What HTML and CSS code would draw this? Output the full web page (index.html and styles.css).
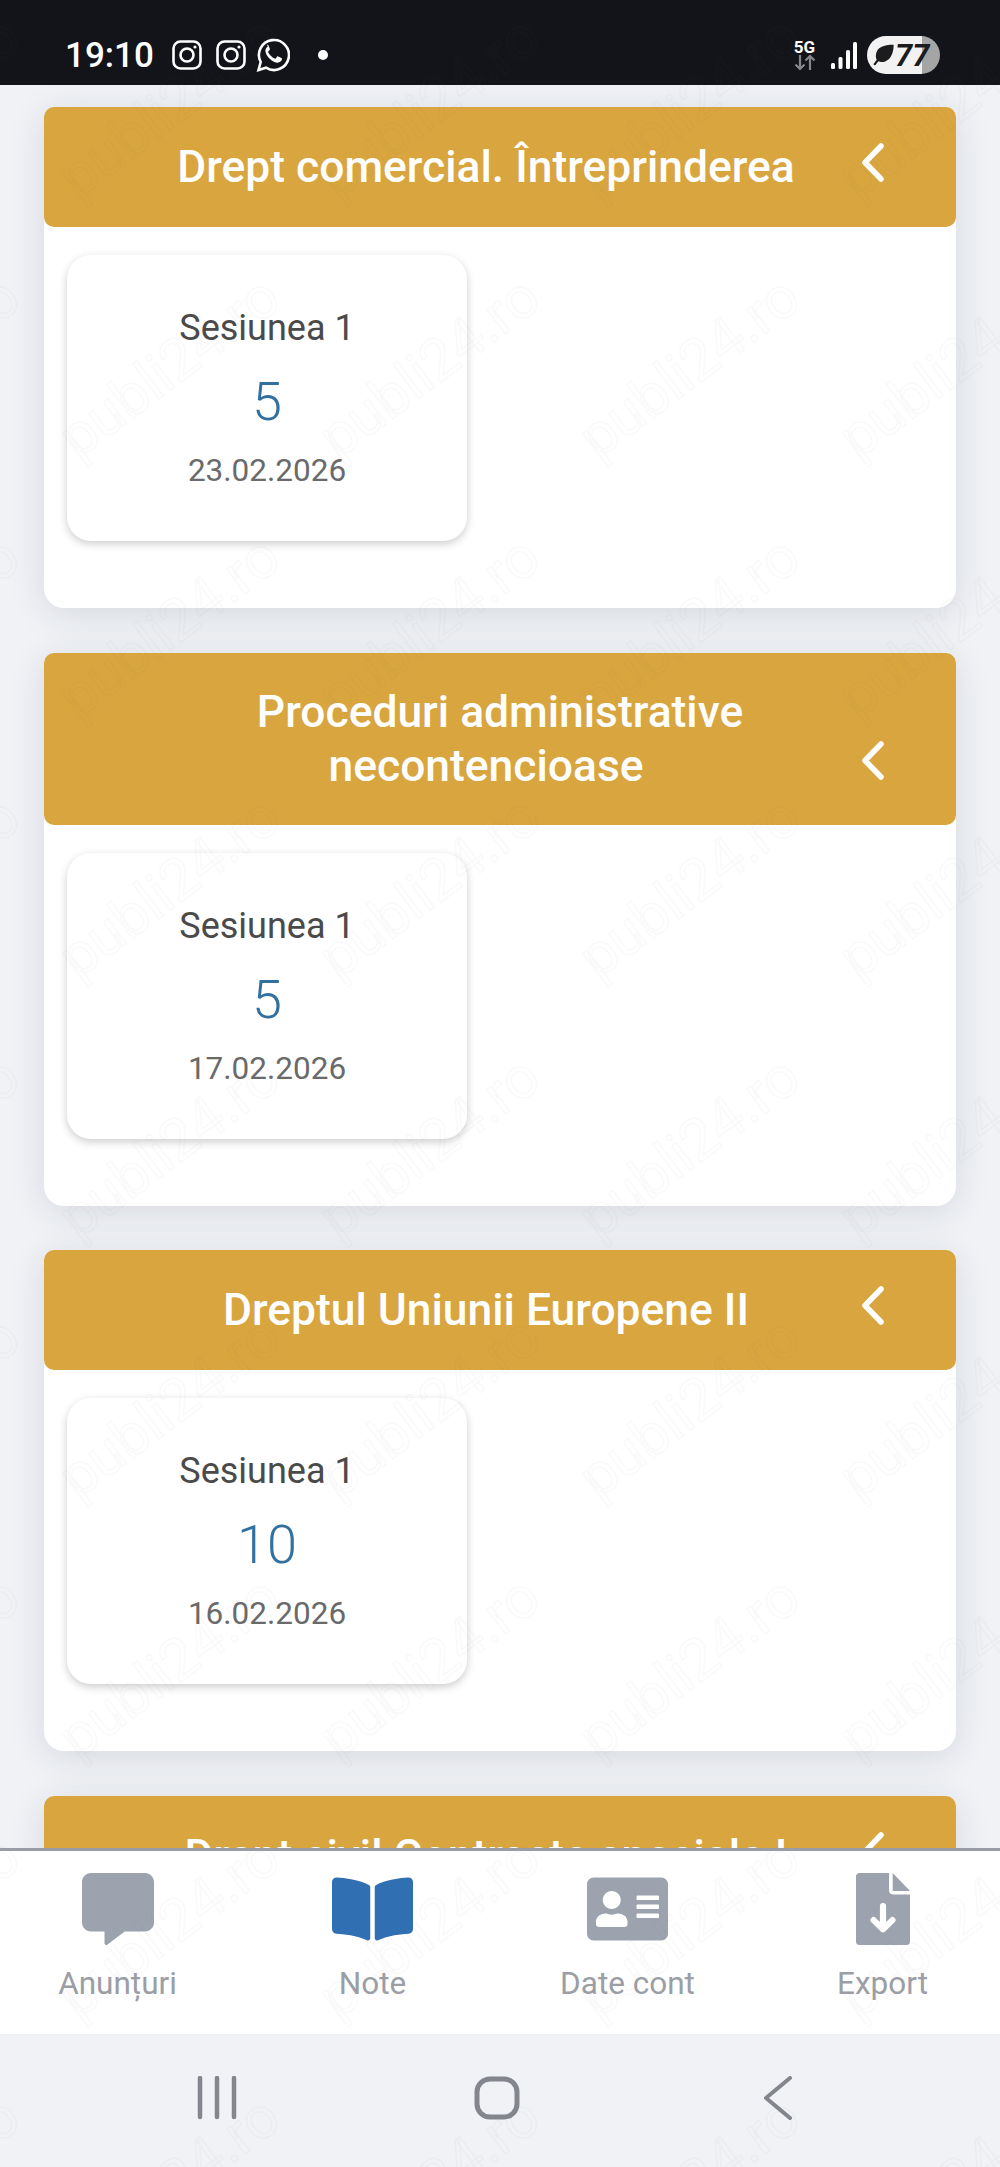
FILE: index.html
```html
<!doctype html>
<html lang="ro">
    <head>
        <meta charset="utf-8"/>
        <title>Note</title>
        <link rel="stylesheet" href="styles.css">
    </head>
    <body>
        <header class="status-bar">
            <div class="status-left">
                <span class="clock">19:10</span>
                <svg class="ig-icon" viewBox="0 0 30 30"><rect x="1.5" y="1.5" width="27" height="27" rx="7"/><circle cx="15" cy="15" r="6.5"/><circle class="dot" cx="23" cy="7" r="1.6"/></svg>
                <svg class="ig-icon" viewBox="0 0 30 30"><rect x="1.5" y="1.5" width="27" height="27" rx="7"/><circle cx="15" cy="15" r="6.5"/><circle class="dot" cx="23" cy="7" r="1.6"/></svg>
                <svg class="wa-icon" viewBox="0 0 34 34"><path class="wa-ring" d="M2.5 32l2.2-8A15 15 0 1 1 10 29.700z"/><path class="wa-phone" d="M11.800 8.800c-1.200.5-2.500 2-2.400 4.200.2 3 2.300 6 4.900 8.300 2.700 2.300 5.800 3.800 8.200 3.300 1.800-.4 3.300-1.800 3.500-3.300.1-.6-.1-.9-.6-1.200l-3.200-1.700c-.5-.2-.9-.1-1.200.3l-1.300 1.700c-.3.3-.6.4-1 .2-1.300-.6-2.800-1.700-4-2.900-1.100-1.100-2-2.400-2.500-3.500-.2-.4-.1-.7.200-1l1.200-1.300c.3-.4.4-.7.2-1.200l-1.400-3.400c-.2-.5-.7-.7-1.400-.5z"/></svg>
                <span class="status-dot"></span>
            </div>
            <div class="status-right">
                <div class="net">
                    <span class="net-label">5G</span>
                    <svg class="net-arrows" viewBox="0 0 22 17"><path d="M6 1v14M1.500 10.500L6 15l4.500-4.500M16 16V2M11.500 6.500L16 2l4.500 4.500"/></svg>
                </div>
                <svg class="signal" viewBox="0 0 26 27"><rect x="0" y="21" width="4" height="6" rx="1.500"/><rect x="7.500" y="15" width="4" height="12" rx="1.500"/><rect x="15" y="8" width="4" height="19" rx="1.500"/><rect x="22" y="0" width="4" height="27" rx="1.500"/></svg>
                <div class="battery">
                    <svg class="leaf" viewBox="0 0 26 26"><path d="M25 1C13 1 5 4 4 13c-.2 2 .2 4 1 5.500L1 24l2 1.500 4-5c2 1 5 1.200 8 .2C22 18 25 10 25 1z"/></svg>
                    <span class="battery-level">77</span>
                </div>
            </div>
        </header>

        <main class="content">
            <section class="subject">
                <div class="subject-head">
                    <h2 class="subject-title">Drept comercial. Întreprinderea</h2>
                    <svg class="chevron" viewBox="0 0 23 39"><path d="M20 3L4 19.500 20 36"/></svg>
                </div>
                <div class="subject-body">
                    <div class="session">
                        <p class="session-name">Sesiunea 1</p>
                        <p class="session-grade">5</p>
                        <p class="session-date">23.02.2026</p>
                    </div>
                </div>
            </section>

            <section class="subject">
                <div class="subject-head">
                    <h2 class="subject-title subject-title-long">Proceduri administrative necontencioase</h2>
                    <svg class="chevron" viewBox="0 0 23 39"><path d="M20 3L4 19.500 20 36"/></svg>
                </div>
                <div class="subject-body">
                    <div class="session">
                        <p class="session-name">Sesiunea 1</p>
                        <p class="session-grade">5</p>
                        <p class="session-date">17.02.2026</p>
                    </div>
                </div>
            </section>

            <section class="subject">
                <div class="subject-head">
                    <h2 class="subject-title">Dreptul Uniunii Europene II</h2>
                    <svg class="chevron" viewBox="0 0 23 39"><path d="M20 3L4 19.500 20 36"/></svg>
                </div>
                <div class="subject-body">
                    <div class="session">
                        <p class="session-name">Sesiunea 1</p>
                        <p class="session-grade">10</p>
                        <p class="session-date">16.02.2026</p>
                    </div>
                </div>
            </section>

            <section class="subject">
                <div class="subject-head">
                    <h2 class="subject-title">Drept civil Contracte speciale I</h2>
                    <svg class="chevron" viewBox="0 0 23 39"><path d="M20 3L4 19.500 20 36"/></svg>
                </div>
            </section>
        </main>

        <nav class="tabs">
            <a class="tab">
                <svg class="tab-icon" viewBox="0 0 512 512"><path d="M448 0H64C28.700 0 0 28.700 0 64v288c0 35.300 28.700 64 64 64h96v84c0 9.800 11.200 15.500 19.100 9.700L304 416h144c35.300 0 64-28.700 64-64V64c0-35.300-28.700-64-64-64z"/></svg>
                <span>Anunțuri</span>
            </a>
            <a class="tab tab-active">
                <svg class="tab-icon" viewBox="0 0 576 512"><path d="M542.220 32.050c-54.800 3.110-163.720 14.430-230.960 55.590-4.640 2.840-7.270 7.890-7.270 13.170v363.870c0 11.550 12.630 18.850 23.280 13.490 69.180-34.820 169.230-44.320 218.700-46.920 16.890-.89 30.020-14.430 30.020-30.660V62.750c.01-17.710-15.350-31.740-33.770-30.700zM264.730 87.640C197.500 46.480 88.580 35.170 33.780 32.050 15.360 31.010 0 45.040 0 62.750V400.600c0 16.240 13.130 29.780 30.020 30.660 49.490 2.600 149.590 12.110 218.770 46.950 10.620 5.350 23.210-1.940 23.210-13.460V100.630c0-5.290-2.620-10.140-7.270-12.990z"/></svg>
                <span>Note</span>
            </a>
            <a class="tab">
                <svg class="tab-icon" viewBox="0 0 576 512"><path d="M528 32H48C21.500 32 0 53.500 0 80v352c0 26.500 21.500 48 48 48h480c26.500 0 48-21.500 48-48V80c0-26.500-21.500-48-48-48zm-352 96c35.300 0 64 28.700 64 64s-28.700 64-64 64-64-28.700-64-64 28.700-64 64-64zm112 236.800c0 10.600-10 19.200-22.400 19.200H86.400C74 384 64 375.400 64 364.800v-19.200c0-31.800 30.100-57.600 67.200-57.600h5c12.300 5.100 25.700 8 39.800 8s27.600-2.900 39.800-8h5c37.100 0 67.200 25.800 67.200 57.600v19.200zM512 312c0 4.400-3.600 8-8 8H360c-4.400 0-8-3.600-8-8v-16c0-4.400 3.600-8 8-8h144c4.400 0 8 3.600 8 8v16zm0-64c0 4.400-3.600 8-8 8H360c-4.400 0-8-3.600-8-8v-16c0-4.400 3.600-8 8-8h144c4.400 0 8 3.600 8 8v16zm0-64c0 4.400-3.600 8-8 8H360c-4.400 0-8-3.600-8-8v-16c0-4.400 3.600-8 8-8h144c4.400 0 8 3.600 8 8v16z"/></svg>
                <span>Date cont</span>
            </a>
            <a class="tab">
                <svg class="tab-icon" viewBox="0 0 384 512"><path d="M235 125V0H24C10.700 0 0 10.700 0 24v464c0 13.300 10.700 24 24 24h336c13.300 0 24-10.700 24-24V152H262c-15 0-27-12-27-27z"/><path d="M261 0l123 128H261z"/><path class="tab-arrow" d="M192 235v160M125 335l67 65 67-65"/></svg>
                <span>Export</span>
            </a>
        </nav>

        <footer class="system-nav">
            <svg class="sys-recent" viewBox="0 0 44 44"><path d="M5 2v39M22 2v39M39 2v39"/></svg>
            <svg class="sys-home" viewBox="0 0 46 44"><rect x="3" y="3" width="40" height="38" rx="13"/></svg>
            <svg class="sys-back" viewBox="0 0 30 44"><path d="M27 2L3 22l24 20"/></svg>
        </footer>

        <!-- the site's watermark, it lies over the whole picture. second text is the part running over the tile edge -->
        <svg class="watermark" width="1000" height="2167">
            <defs>
                <pattern id="wm" width="260" height="260" patternUnits="userSpaceOnUse">
                    <text x="78" y="200" transform="rotate(-37 78 200)">publi24.ro</text>
                    <text x="-182" y="200" transform="rotate(-37 -182 200)">publi24.ro</text>
                </pattern>
            </defs>
            <rect width="1000" height="2167" fill="url(#wm)"/>
        </svg>
    </body>
</html>
```
FILE: styles.css
```css
* {
    margin: 0;
    padding: 0;
    box-sizing: border-box;
}
body {
    position: relative;
    display: flex;
    flex-direction: column;
    width: 1000px;
    height: 2167px;
    overflow: hidden;
    background-color: #f0f2f6;
    font-family: Roboto, "Liberation Sans", sans-serif;
}

/* status bar */
.status-bar {
    display: flex;
    justify-content: space-between;
    align-items: center;
    flex-shrink: 0;
    height: 85px;
    padding: 25px 60px 0 65px;
    background-color: #12141a;
    color: #fff;
}
.status-left {
    display: flex;
    align-items: center;
}
.clock {
    font-size: 35px;
    font-weight: 500;
    margin-right: 18px;
}
.ig-icon {
    width: 30px;
    height: 30px;
    margin-right: 14px;
    fill: none;
    stroke: #fff;
    stroke-width: 2.600;
}
.ig-icon .dot {
    fill: #fff;
    stroke: none;
}
.wa-icon {
    width: 34px;
    height: 34px;
    margin-left: -4px;
}
.wa-ring {
    fill: none;
    stroke: #fff;
    stroke-width: 2.600;
}
.wa-phone {
    fill: #fff;
}
.status-dot {
    width: 10px;
    height: 10px;
    margin-left: 28px;
    border-radius: 50%;
    background-color: #fff;
}
.status-right {
    display: flex;
    align-items: center;
}
.net {
    display: flex;
    flex-direction: column;
    align-items: center;
    width: 23px;
    margin-right: 15px;
}
.net-label {
    font-size: 17px;
    font-weight: 700;
    line-height: 14px;
}
.net-arrows {
    width: 22px;
    height: 17px;
    fill: none;
    stroke: #85878c;
    stroke-width: 2.200;
}
.signal {
    width: 26px;
    height: 27px;
    margin-right: 10px;
    fill: #fff;
}
.battery {
    display: flex;
    align-items: center;
    width: 73px;
    height: 38px;
    padding-left: 5px;
    border-radius: 19px;
    background: linear-gradient(to right, #f2f2f2 76%, #a5a5a5 76%);
    color: #1c1c1e;
}
.leaf {
    width: 23px;
    height: 22px;
    fill: #1c1c1e;
}
.battery-level {
    font-size: 31px;
    font-weight: 700;
    font-style: italic;
}

/* subjects list */
.content {
    display: flex;
    flex-direction: column;
    flex: 1;
    min-height: 0;
    gap: 44.5px;
    padding: 22px 44px 0;
    overflow: hidden;
}
.subject {
    flex-shrink: 0;
    border-radius: 10px 10px 20px 20px;
    background-color: #fff;
    box-shadow: 0 6px 36px rgba(30, 40, 60, .12);
}
.subject-head {
    display: flex;
    align-items: flex-end;
    min-height: 120px;
    padding: 32px 72px 32px 67px;
    border-radius: 10px;
    background-color: #d9a53e;
    color: #fff;
}
.subject-title {
    flex: 1;
    align-self: center;
    font-size: 44.4px;
    font-weight: 500;
    line-height: 54px;
    text-align: center;
}
.subject-title-long {
    text-indent: 28px;
    padding: 0 70px;
}
.chevron {
    flex-shrink: 0;
    width: 23px;
    height: 39px;
    margin-bottom: 13px;
    fill: none;
    stroke: #fff;
    stroke-width: 5.500;
    stroke-linecap: round;
    stroke-linejoin: round;
}
.subject-body {
    padding: 28px 23px 67px;
}
.session {
    width: 400px;
    height: 286px;
    padding-top: 49px;
    border-radius: 24px;
    background-color: #fff;
    box-shadow: 0 3px 8px rgba(0, 0, 0, .2);
    text-align: center;
}
.session-name {
    font-size: 36px;
    line-height: 48px;
    color: #4a4a4a;
}
.session-grade {
    margin-top: 20px;
    font-size: 54px;
    font-weight: 300;
    line-height: 60px;
    color: #32709f;
}
.session-date {
    margin-top: 17px;
    font-size: 31.5px;
    line-height: 44px;
    color: #6a6a6a;
}

/* bottom tabs */
.tabs {
    display: grid;
    grid-template-columns: repeat(4, 255px);
    justify-content: center;
    flex-shrink: 0;
    height: 186px;
    padding-top: 22px;
    border-top: 3px solid #9a9da3;
    background-color: #fff;
}
.tab {
    display: flex;
    flex-direction: column;
    align-items: center;
    font-size: 31.5px;
    color: #9b9ea5;
}
.tab-icon {
    height: 72px;
    margin-bottom: 20px;
    fill: #9ca3af;
}
.tab-active .tab-icon {
    fill: #2f6fb2;
}
.tab-arrow {
    fill: none;
    stroke: #fff;
    stroke-width: 44;
    stroke-linecap: round;
    stroke-linejoin: round;
}

/* android buttons */
.system-nav {
    display: flex;
    align-items: center;
    flex-shrink: 0;
    height: 133px;
    padding: 0 0 6px 195px;
    background-color: #f0f2f6;
}
.system-nav svg {
    fill: none;
    stroke: #83868d;
    stroke-linecap: round;
    stroke-linejoin: round;
}
.sys-recent {
    width: 44px;
    height: 44px;
    stroke-width: 4.500;
}
.sys-home {
    width: 46px;
    height: 44px;
    margin-left: 235px;
    stroke-width: 5;
}
.sys-back {
    width: 30px;
    height: 44px;
    margin-left: 243px;
    stroke-width: 4;
}

.watermark {
    position: absolute;
    top: 0;
    left: 0;
    pointer-events: none;
}
.watermark text {
    font-family: Roboto, sans-serif;
    font-size: 58px;
    fill: none;
    stroke: rgba(90, 90, 90, .035);
    stroke-width: 1.500;
}
```
